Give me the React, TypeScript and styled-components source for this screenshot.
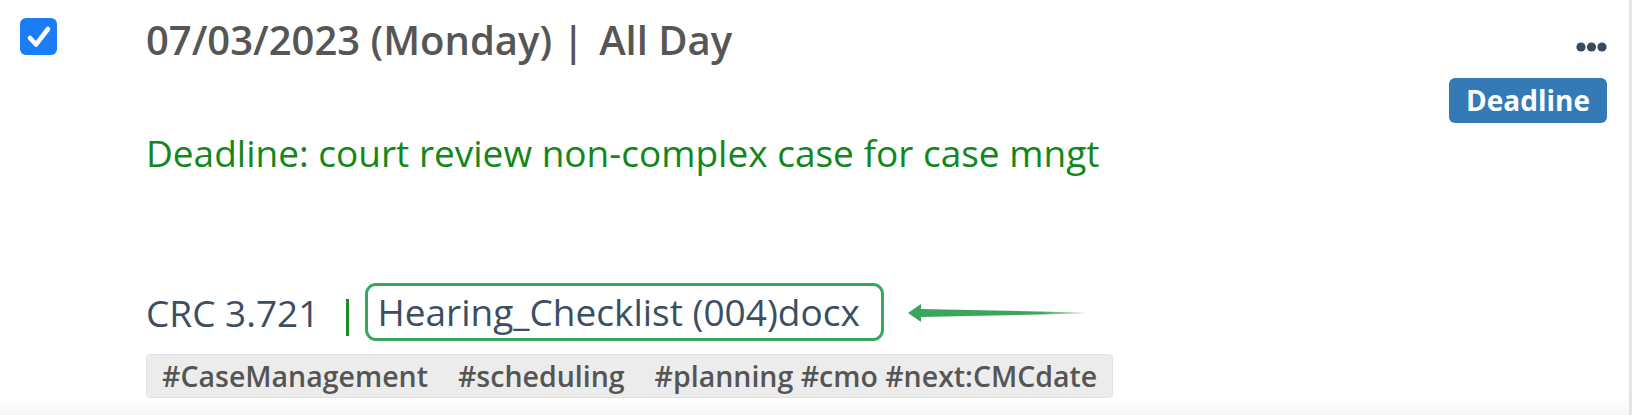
import { createGlobalStyle } from 'styled-components';
import styled from 'styled-components';

const GlobalStyle = createGlobalStyle`
    html, body {
        margin: 0;
        padding: 0;
        background: #fff;
    }
    body {
        font-family: 'Open Sans', 'Noto Sans', sans-serif;
    }
`;

const Card = styled.div`
    display: flex;
    align-items: flex-start;
    box-sizing: border-box;
    height: 415px;
    padding: 12px 22px 0 20px;
    border-right: 3px solid #e4e4e9;
    background: linear-gradient(to bottom, #fff 0, #fff 398px, #f6f6f7 415px);
`;

const CheckBox = styled.div`
    flex: none;
    width: 37px;
    height: 37px;
    margin-top: 6px;
    border-radius: 6px;
    background: #1b7cf7;
    display: flex;
    align-items: center;
    justify-content: center;
`;

const Content = styled.div`
    flex: 1;
    margin-left: 89px;
    display: flex;
    flex-direction: column;
    align-items: flex-start;
`;

const Heading = styled.h2`
    margin: 0;
    font-size: 40px;
    line-height: 56px;
    font-weight: 600;
    color: #565656;
    white-space: pre;
`;

const Pipe = styled.span`
    margin: 0 15px 0 10px;
`;

const Summary = styled.p`
    margin: 60px 0 0;
    font-size: 37px;
    line-height: 50px;
    color: #12871a;
`;

const RefRow = styled.div`
    display: flex;
    align-items: center;
    margin-top: 105px;
    font-size: 37px;
    color: #3b4e63;
`;

const Separator = styled.span`
    width: 3px;
    height: 37px;
    margin: 10px 16px 0 27px;
    background: #1d8a24;
`;

const Attachment = styled.span`
    border: 3px solid #3aa65c;
    border-radius: 11px;
    padding: 1px 21px 1px 9px;
    line-height: 50px;
`;

const Arrow = styled.svg`
    margin: 4px 0 0 24px;
`;

const TagList = styled.div`
    display: flex;
    gap: 30px;
    margin-top: 13px;
    padding: 0 15px;
    height: 42px;
    align-items: center;
    background: #ececec;
    border: 1px solid #e2e2e2;
    border-radius: 4px;
    font-size: 28.5px;
    font-weight: 600;
    color: #555;
`;

const Tag = styled.span`
    white-space: pre;
`;

const Side = styled.div`
    flex: none;
    display: flex;
    flex-direction: column;
    align-items: flex-end;
    padding-top: 30px;
`;

const Dots = styled.svg`
    display: block;
`;

const Badge = styled.span`
    margin-top: 26px;
    display: inline-block;
    padding: 0 17px;
    height: 45px;
    line-height: 45px;
    border-radius: 6px;
    background: #337ab7;
    color: #fff;
    font-size: 28px;
    font-weight: 700;
`;

const App = () => {
    return (
        <>
            <GlobalStyle />
            <Card>
                <CheckBox>
                    <svg width="30" height="30" viewBox="0 0 30 30">
                        <path d="M6 16l6 6.5L24 7" fill="none" stroke="#fff" strokeWidth="4.6" strokeLinecap="round" strokeLinejoin="round" />
                    </svg>
                </CheckBox>
                <Content>
                    <Heading>
                        07/03/2023 (Monday)<Pipe>|</Pipe>All Day
                    </Heading>
                    <Summary>Deadline: court review non-complex case for case mngt</Summary>
                    <RefRow>
                        <span>CRC 3.721</span>
                        <Separator />
                        <Attachment>Hearing_Checklist (004)docx</Attachment>
                        <Arrow width="176" height="22" viewBox="0 0 176 22">
                            <defs>
                                <linearGradient id="tail" x1="0" x2="1" y1="0" y2="0">
                                    <stop offset="0" stopColor="#3aa65c" />
                                    <stop offset="0.75" stopColor="#3aa65c" />
                                    <stop offset="1" stopColor="#3aa65c" stopOpacity="0.2" />
                                </linearGradient>
                            </defs>
                            <path d="M0 10 L13 1 L13 6 L176 9.5 L176 10.5 L13 14 L13 19 Z" fill="url(#tail)" />
                        </Arrow>
                    </RefRow>
                    <TagList>
                        <Tag>#CaseManagement</Tag>
                        <Tag>#scheduling</Tag>
                        <Tag>#planning #cmo #next:CMCdate</Tag>
                    </TagList>
                </Content>
                <Side>
                    <Dots width="31" height="10" viewBox="0 0 31 10">
                        <circle cx="5" cy="5" r="4.6" fill="#3a4a5d" />
                        <circle cx="15.5" cy="5" r="4.6" fill="#3a4a5d" />
                        <circle cx="26" cy="5" r="4.6" fill="#3a4a5d" />
                    </Dots>
                    <Badge>Deadline</Badge>
                </Side>
            </Card>
        </>
    );
};

export default App;
